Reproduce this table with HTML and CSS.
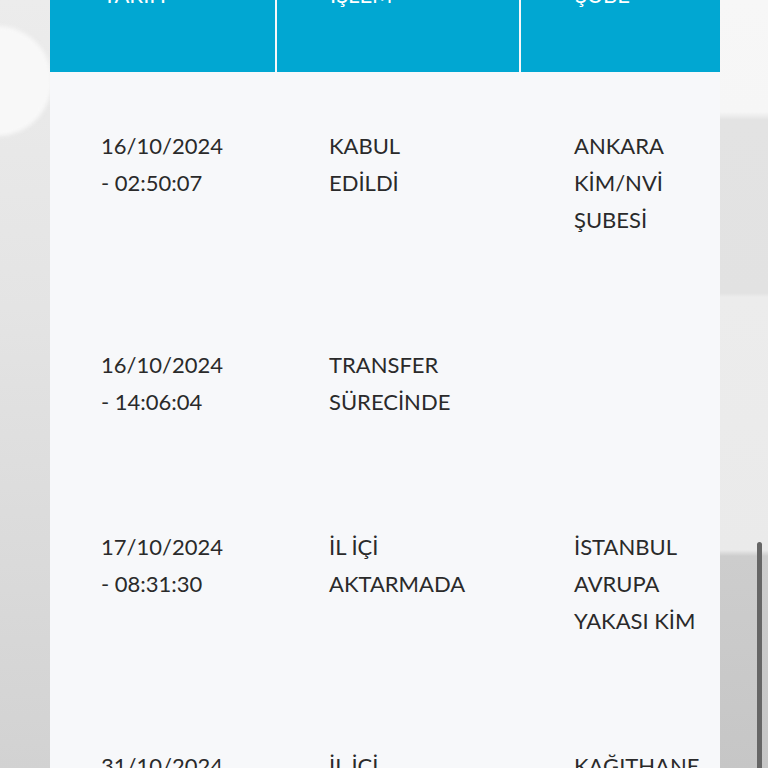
FILE: index.html
```html
<!DOCTYPE html>
<html lang="tr">
<head>
<meta charset="utf-8">
<link rel="stylesheet" href="styles.css">
</head>
<body>
<div class="backdrop">
  <div class="blob-left"></div>
  <div class="strip-right"></div>
</div>
<main class="panel">
  <div class="grid">
    <div class="th">TARİH</div>
    <div class="th">İŞLEM</div>
    <div class="th">ŞUBE</div>

    <div class="td c1">16/10/2024 - 02:50:07</div>
    <div class="td c2">KABUL EDİLDİ</div>
    <div class="td c3">ANKARA KİM/NVİ ŞUBESİ</div>

    <div class="td c1">16/10/2024 - 14:06:04</div>
    <div class="td c2">TRANSFER SÜRECİNDE</div>
    <div class="td c3"></div>

    <div class="td c1">17/10/2024 - 08:31:30</div>
    <div class="td c2">İL İÇİ AKTARMADA</div>
    <div class="td c3">İSTANBUL AVRUPA YAKASI KİM</div>

    <div class="td c1">31/10/2024 - 10:12:45</div>
    <div class="td c2">İL İÇİ AKTARMADA</div>
    <div class="td c3">KAĞITHANE ŞUBESİ</div>
  </div>
</main>
<div class="scrollbar"></div>
</body>
</html>
```

FILE: styles.css
```css
html, body {
  margin: 0;
  padding: 0;
  height: 768px;
  overflow: hidden;
}
body {
  font-family: Lato, "Open Sans", sans-serif;
  background: linear-gradient(180deg, #ececec 0%, #e4e4e4 40%, #d2d2d2 100%);
  position: relative;
}
.backdrop {
  position: absolute;
  inset: 0;
  pointer-events: none;
}
.blob-left {
  position: absolute;
  left: -60px;
  top: 26px;
  width: 112px;
  height: 110px;
  border-radius: 55px;
  background: #f8f8f8;
  filter: blur(2px);
}
.strip-right {
  position: absolute;
  right: 0;
  top: 0;
  width: 48px;
  height: 768px;
  background: linear-gradient(180deg, #f7f7f7 0, #f6f6f6 112px, #e3e3e3 120px, #e2e2e2 293px, #ececec 297px, #eaeaea 550px, #cdcdcd 556px, #c6c6c6 100%);
}
.panel {
  position: relative;
  margin: -48px 0 0 50px;
  width: 670px;
  background: #f7f8fa;
}
.grid {
  display: grid;
  grid-template-columns: 225px 242px 199px;
  column-gap: 2px;
  background: #f7f8fa;
}
.th {
  background: #01a7d2;
  color: #ffffff;
  font-size: 22px;
  line-height: 37px;
  height: 120px;
  box-sizing: border-box;
  padding: 24px 0 0 53px;
  box-shadow: 0 1px 0 #e9f6fb;
}
.grid .th:nth-child(3) { padding-left: 54px; }
.td {
  font-size: 22px;
  line-height: 37px;
  color: #2a2a2a;
  padding: 55px 0 53px 51px;
  background: #f7f8fa;
  overflow: hidden;
}
.c1 { padding-right: 48px; }
.c2 { padding-right: 50px; padding-left: 52px; }
.c3 { padding-right: 8px; padding-left: 53px; }
.scrollbar {
  position: absolute;
  left: 757px;
  top: 542px;
  width: 5px;
  height: 240px;
  border-radius: 3px;
  background: #666666;
}
```
